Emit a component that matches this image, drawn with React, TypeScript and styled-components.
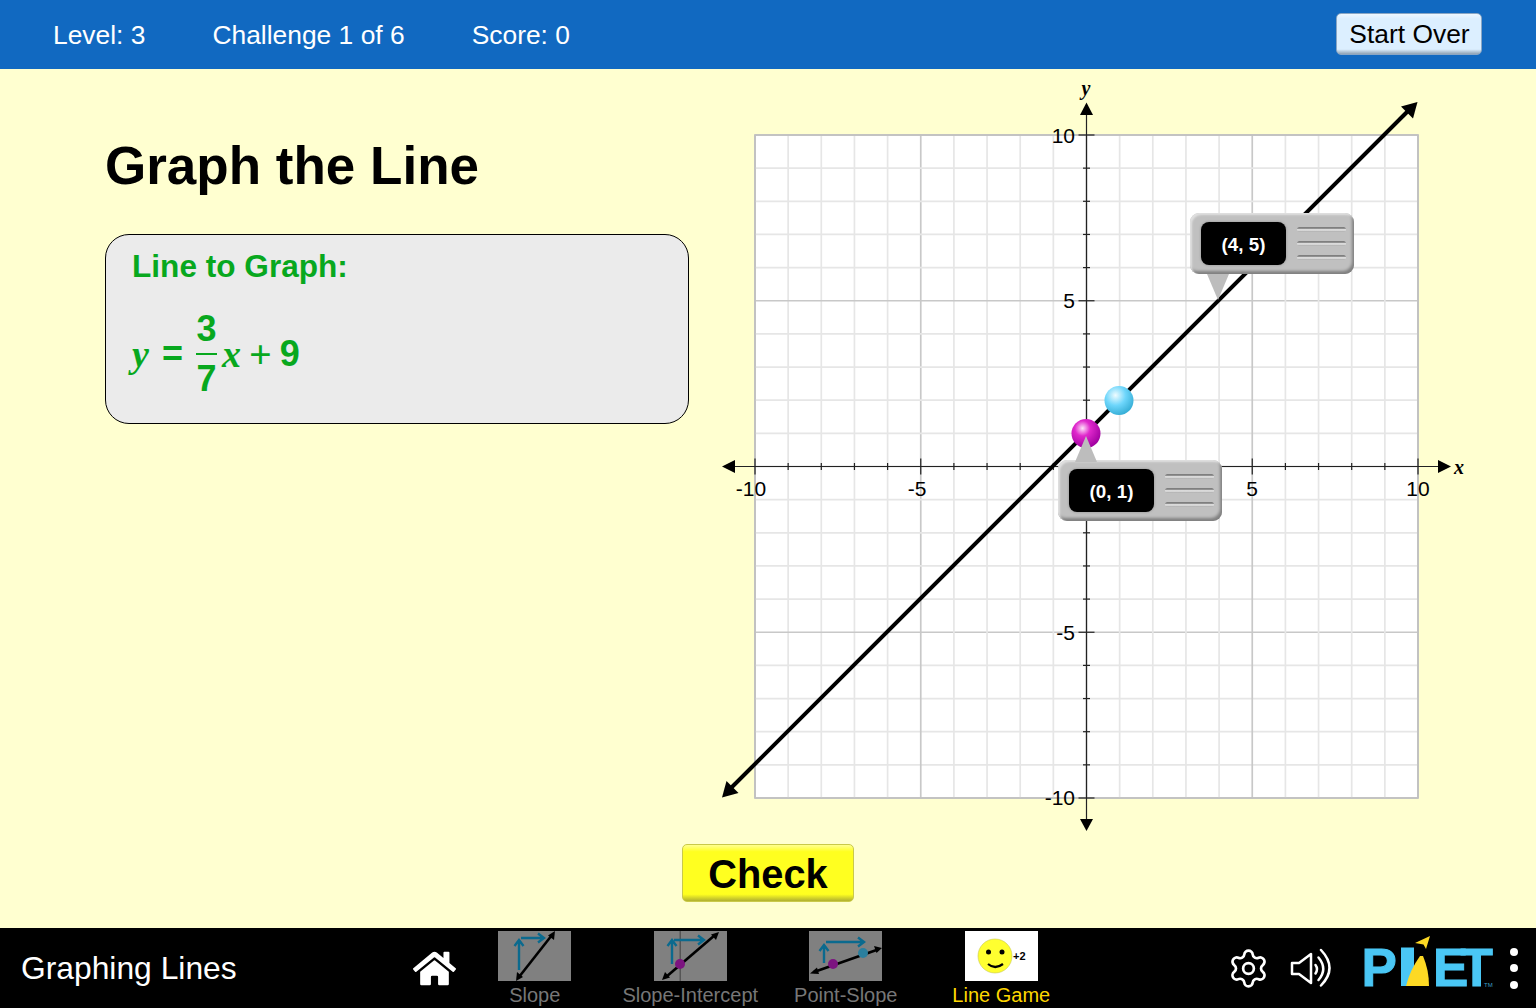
import React from "react";
import styled, { createGlobalStyle } from "styled-components";
import { FaHome } from "react-icons/fa";
import { Settings } from "lucide-react";

const GlobalStyle = createGlobalStyle`
  html, body { margin: 0; padding: 0; }
  body { font-family: "Liberation Sans", Arial, sans-serif; background: #ffffd0; overflow: hidden; }
`;

const Page = styled.div`
  width: 1536px;
  height: 1008px;
  display: flex;
  flex-direction: column;
`;

const TopBar = styled.header`
  height: 69px;
  flex: none;
  box-sizing: border-box;
  background: #1169c1;
  color: #fff;
  display: flex;
  align-items: center;
  padding: 2px 54px 0 53px;
  gap: 67px;
  font-size: 26.4px;
`;

const StartOver = styled.button`
  margin-left: auto;
  margin-top: -3px;
  width: 146px;
  height: 42px;
  padding: 0 0 0 1px;
  border: 1px solid #8aa6c4;
  border-radius: 5px;
  background: linear-gradient(#eef7ff 0%, #dcefff 12%, #dcefff 88%, #8fa2b4 100%);
  color: #000;
  font: 26.4px "Liberation Sans", Arial, sans-serif;
`;

const Main = styled.main`
  flex: 1;
  display: flex;
  flex-direction: column;
  background: #ffffd0;
`;

const Row = styled.div`
  display: flex;
  height: 770px;
`;

const LeftColumn = styled.section`
  width: 700px;
  box-sizing: border-box;
  padding: 69px 0 0 105px;
`;

const Title = styled.h1`
  margin: 0 0 41px;
  font-size: 53px;
  line-height: 56px;
  font-weight: bold;
  color: #000;
`;

const EquationPanel = styled.div`
  width: 584px;
  height: 190px;
  margin-top: -1px;
  box-sizing: border-box;
  padding: 13px 0 0 26px;
  border: 1px solid #000;
  border-radius: 24px;
  background: #ebebeb;
  color: #08a81e;
`;

const PanelHeading = styled.div`
  font-size: 31.6px;
  line-height: 36px;
  font-weight: bold;
`;

const Equation = styled.div`
  display: flex;
  align-items: center;
  margin-top: 28px;
  height: 84px;
`;

const MathVar = styled.span<{ $gap?: number }>`
  font: italic bold 38px "Liberation Serif", serif;
  margin-left: ${(p) => p.$gap ?? 0}px;
`;

const MathNum = styled.span<{ $gap?: number }>`
  font-size: 36px;
  font-weight: bold;
  margin-left: ${(p) => p.$gap ?? 0}px;
`;

const MathPlus = styled.span`
  font: bold 40px "Liberation Serif", serif;
  margin-left: 8px;
`;

const Fraction = styled.div`
  display: flex;
  flex-direction: column;
  align-items: center;
  margin-left: 13px;
  font-size: 36px;
  font-weight: bold;
  line-height: 40px;
`;

const FractionBar = styled.div`
  width: 21px;
  height: 2px;
  margin: 4px 0;
  background: currentColor;
`;

const GraphArea = styled.div`
  position: relative;
  width: 780px;
  height: 770px;
`;

const GraphSvg = styled.svg`
  display: block;
`;

const Callout = styled.div<{ $left: number; $top: number }>`
  position: absolute;
  left: ${(p) => p.$left}px;
  top: ${(p) => p.$top}px;
  width: 164px;
  height: 61px;
  box-sizing: border-box;
  padding: 9px 8px 9px 11px;
  display: flex;
  align-items: stretch;
  border-radius: 9px;
  background: #c0c0c0;
  box-shadow: inset 2px 2px 2px #e0e0e0, inset -2px -3px 3px #808080;
`;

const CalloutPointer = styled.div<{ $up?: boolean; $left: number }>`
  position: absolute;
  left: ${(p) => p.$left}px;
  width: 22px;
  height: 26px;
  background: #bdbdbd;
  ${(p) =>
    p.$up
      ? "top: -24px; clip-path: polygon(50% 0, 100% 100%, 0 100%);"
      : "bottom: -26px; clip-path: polygon(0 0, 100% 0, 50% 100%);"}
`;

const CalloutValue = styled.div`
  width: 85px;
  box-sizing: border-box;
  padding-top: 3px;
  border-radius: 8px;
  background: #000;
  box-shadow: 0 0 2px 1px #a8a8a8;
  color: #fff;
  font-size: 18.8px;
  font-weight: bold;
  display: flex;
  align-items: center;
  justify-content: center;
`;

const Grip = styled.div`
  flex: 1;
  margin-left: 11px;
  display: flex;
  flex-direction: column;
  justify-content: space-around;
`;

const GripLine = styled.div`
  height: 5px;
  border-radius: 3px;
  background: linear-gradient(#7f7f7f 0%, #7f7f7f 25%, #ececec 55%, #a8a8a8 100%);
`;

const CheckButton = styled.button`
  align-self: center;
  margin-top: 5px;
  width: 172px;
  height: 58px;
  padding: 2px 0 0;
  border: 1px solid #c9c94a;
  border-radius: 5px;
  background: linear-gradient(#ffff90 0%, #ffff20 12%, #ffff20 88%, #b0b030 100%);
  color: #000;
  font: bold 39.8px "Liberation Sans", Arial, sans-serif;
`;

const BottomBar = styled.footer`
  height: 80px;
  flex: none;
  background: #000;
  color: #fff;
  display: flex;
  align-items: center;
`;

const SimTitle = styled.div`
  width: 413px;
  box-sizing: border-box;
  padding-left: 21px;
  font-size: 31.8px;
`;

const HomeButton = styled.div`
  width: 44px;
  display: flex;
  color: #fff;
  font-size: 43px;
`;

const ScreenTab = styled.div<{ $active?: boolean }>`
  width: 155.5px;
  height: 80px;
  display: flex;
  flex-direction: column;
  align-items: center;
  padding-top: 3px;
  box-sizing: border-box;
  font-size: 20px;
  color: ${(p) => (p.$active ? "#ffd700" : "#777")};
`;

const TabThumb = styled.svg`
  display: block;
  width: 73px;
  height: 50px;
  margin-bottom: 2px;
`;

const TabLabel = styled.div`
  line-height: 24px;
  white-space: nowrap;
`;

const ToolGroup = styled.div`
  display: flex;
  align-items: center;
  margin-left: 147.5px;
`;

const SoundIcon = styled.svg`
  margin-left: 20px;
  display: block;
`;

const LogoSvg = styled.svg`
  margin: 0 0 4px 27px;
  display: block;
`;

const MoreDots = styled.div`
  margin-left: 13px;
  display: flex;
  flex-direction: column;
  gap: 8.5px;
`;

const Dot = styled.div`
  width: 8px;
  height: 8px;
  border-radius: 50%;
  background: #fff;
`;

const UNIT = 33.15;
const X0 = 1086.5;
const Y0 = 466.5;
const steps = Array.from({ length: 21 }, (_, i) => i - 10);
const px = (v: number) => X0 + v * UNIT;
const py = (v: number) => Y0 - v * UNIT;

const AXIS = "#222";
const LABEL_FONT = '"Liberation Sans", Arial, sans-serif';

const Graph: React.FC = () => (
  <GraphSvg width={780} height={770} viewBox="700 69 780 770">
    <defs>
      <radialGradient id="magentaBall" cx="38%" cy="32%" r="70%">
        <stop offset="0%" stopColor="#ffe4fa" />
        <stop offset="38%" stopColor="#e028cc" />
        <stop offset="100%" stopColor="#a000a0" />
      </radialGradient>
      <radialGradient id="cyanBall" cx="38%" cy="32%" r="70%">
        <stop offset="0%" stopColor="#f0fcff" />
        <stop offset="50%" stopColor="#6ed6fb" />
        <stop offset="100%" stopColor="#36aed6" />
      </radialGradient>
    </defs>
    <rect x={755} y={135} width={663} height={663} fill="#fff" />
    {steps.map((v) => {
      const major = v % 5 === 0;
      return (
        <g key={v} stroke={major ? "#c8c8c8" : "#e6e6e6"} strokeWidth={1.7}>
          <line x1={px(v)} y1={135} x2={px(v)} y2={798} />
          <line x1={755} y1={py(v)} x2={1418} y2={py(v)} />
        </g>
      );
    })}
    <rect x={755} y={135} width={663} height={663} fill="none" stroke="#c0c0c0" strokeWidth={1.7} />

    <g stroke={AXIS} strokeWidth={1.2}>
      <line x1={730} y1={Y0} x2={1442} y2={Y0} />
      <line x1={X0} y1={110} x2={X0} y2={824} />
      {steps
        .filter((v) => v !== 0)
        .map((v) => {
          const t = v % 5 === 0 ? 8 : 3.5;
          return (
            <g key={v}>
              <line x1={px(v)} y1={Y0 - t} x2={px(v)} y2={Y0 + t} />
              <line x1={X0 - t} y1={py(v)} x2={X0 + t} y2={py(v)} />
            </g>
          );
        })}
    </g>
    <polygon points="722,466.5 735,460 735,473" fill="#000" />
    <polygon points="1451,466.5 1438,460 1438,473" fill="#000" />
    <polygon points="1086.5,102.5 1080,115 1093,115" fill="#000" />
    <polygon points="1086.5,831 1080,819 1093,819" fill="#000" />

    <g fontFamily={LABEL_FONT} fontSize={21} fill="#000">
      <text x={751} y={496} textAnchor="middle">-10</text>
      <text x={917} y={496} textAnchor="middle">-5</text>
      <text x={1252} y={496} textAnchor="middle">5</text>
      <text x={1418} y={496} textAnchor="middle">10</text>
      <text x={1075} y={143} textAnchor="end">10</text>
      <text x={1075} y={308} textAnchor="end">5</text>
      <text x={1075} y={640} textAnchor="end">-5</text>
      <text x={1075} y={805} textAnchor="end">-10</text>
    </g>
    <g fontFamily='"Liberation Serif", serif' fontSize={20} fontStyle="italic" fontWeight="bold" fill="#000">
      <text x={1086} y={95} textAnchor="middle">y</text>
      <text x={1459} y={474} textAnchor="middle">x</text>
    </g>

    <line x1={730} y1={789} x2={1409} y2={110} stroke="#000" strokeWidth={4} />
    <polygon points="722,797.5 726.5,781 738.5,793" fill="#000" />
    <polygon points="1417.5,102 1413,118.5 1401,106.5" fill="#000" />

    <circle cx={1119} cy={400.5} r={14.5} fill="url(#cyanBall)" />
    <circle cx={1086} cy={433.5} r={14.5} fill="url(#magentaBall)" />
  </GraphSvg>
);

const PointCallout: React.FC<{ label: string; left: number; top: number; up?: boolean; pointerLeft: number }> = ({
  label,
  left,
  top,
  up,
  pointerLeft,
}) => (
  <Callout $left={left} $top={top}>
    <CalloutPointer $up={up} $left={pointerLeft} />
    <CalloutValue>{label}</CalloutValue>
    <Grip>
      <GripLine />
      <GripLine />
      <GripLine />
    </Grip>
  </Callout>
);

const SlopeThumb = () => (
  <TabThumb viewBox="0 0 73 50">
    <rect width={73} height={50} fill="#808080" />
    <g stroke="#0b6a8e" strokeWidth={2.4} fill="none">
      <path d="M21 39V10M16.5 15l4.5-6 4.5 6" />
      <path d="M23 7H46M40 2.5l6 4.5-6 4.5" />
    </g>
    <path d="M21 46L54 4" stroke="#000" strokeWidth={2.6} />
    <polygon points="18,50 19,41 25,46" fill="#000" />
    <polygon points="57,0 56,9 50,4.5" fill="#000" />
  </TabThumb>
);

const InterceptThumb = () => (
  <TabThumb viewBox="0 0 73 50">
    <rect width={73} height={50} fill="#808080" />
    <rect x={25.5} width={1.5} height={50} fill="#555" />
    <g stroke="#0b6a8e" strokeWidth={2.4} fill="none">
      <path d="M18 33V10M13.5 15l4.5-6 4.5 6" />
      <path d="M20 9H50M44 4.5l6 4.5-6 4.5" />
    </g>
    <path d="M12 46L61 4" stroke="#000" strokeWidth={2.6} />
    <polygon points="8,49 11,41 16,46.5" fill="#000" />
    <polygon points="65,1 62,9 57,3.5" fill="#000" />
    <circle cx={26} cy={33} r={5} fill="#7c1480" />
  </TabThumb>
);

const PointSlopeThumb = () => (
  <TabThumb viewBox="0 0 73 50">
    <rect width={73} height={50} fill="#808080" />
    <g stroke="#0b6a8e" strokeWidth={2.4} fill="none">
      <path d="M15 32V15M10.5 20l4.5-6 4.5 6" />
      <path d="M17 11H55M49 6.5l6 4.5-6 4.5" />
    </g>
    <path d="M5 41L69 18.5" stroke="#000" strokeWidth={2.6} />
    <polygon points="1,42.5 8,36.5 10,43" fill="#000" />
    <polygon points="73,17 65,15 67.5,22" fill="#000" />
    <circle cx={24} cy={33} r={5} fill="#7c1480" />
    <circle cx={54} cy={22} r={5} fill="#2b7f9e" />
  </TabThumb>
);

const GameThumb = () => (
  <TabThumb viewBox="0 0 73 50">
    <rect width={73} height={50} fill="#fff" />
    <circle cx={30} cy={25} r={17} fill="#ffff30" stroke="#c8c850" strokeWidth={0.6} />
    <circle cx={23.5} cy={21} r={2.5} fill="#000" />
    <circle cx={37} cy={21} r={2.5} fill="#000" />
    <path d="M23 33 Q30 39 38 33" stroke="#000" strokeWidth={2.2} fill="none" />
    <text x={48} y={29} fontFamily={LABEL_FONT} fontSize={11} fontWeight="bold" fill="#000">+2</text>
  </TabThumb>
);

const Sound = () => (
  <SoundIcon width={44} height={40} viewBox="0 0 44 40" fill="none" stroke="#fff" strokeWidth={2.5} strokeLinecap="round" strokeLinejoin="round">
    <path d="M2 15H9L21 6V35L9 26H2Z" />
    <path d="M25.5 17Q28.5 21 25.5 25.5" />
    <path d="M28.5 9.5Q38 21 28.5 32" />
    <path d="M31 2Q48 20 31 37.5" />
  </SoundIcon>
);

const Logo = () => (
  <LogoSvg width={136} height={64} viewBox="-4 0 136 64">
    <g fontFamily={LABEL_FONT} fontWeight="bold" fontSize={53} fill="#4ac7f5" stroke="#4ac7f5" strokeWidth={1}>
      <text x={-3.5} y={51.5}>P</text>
      <text x={68} y={51.5} letterSpacing={-7.8}>ET</text>
    </g>
    <rect x={36} y={13.5} width={13} height={38.5} fill="#4ac7f5" />
    <path d="M41 52Q45 36 55 22H58Q64 36 64 52Z" fill="#fdd924" />
    <polygon points="50,9 65,2 61,15 58.5,10.5" fill="#fdd924" />
    <text x={119} y={53} fontFamily={LABEL_FONT} fontSize={6} fill="#3a9fc4">TM</text>
  </LogoSvg>
);

const App: React.FC = () => (
  <Page>
    <GlobalStyle />
    <TopBar>
      <span>Level: 3</span>
      <span>Challenge 1 of 6</span>
      <span>Score: 0</span>
      <StartOver>Start Over</StartOver>
    </TopBar>
    <Main>
      <Row>
        <LeftColumn>
          <Title>Graph the Line</Title>
          <EquationPanel>
            <PanelHeading>Line to Graph:</PanelHeading>
            <Equation>
              <MathVar>y</MathVar>
              <MathNum $gap={13}>=</MathNum>
              <Fraction>
                <span>3</span>
                <FractionBar />
                <span>7</span>
              </Fraction>
              <MathVar $gap={5}>x</MathVar>
              <MathPlus>+</MathPlus>
              <MathNum $gap={8}>9</MathNum>
            </Equation>
          </EquationPanel>
        </LeftColumn>
        <GraphArea>
          <Graph />
          <PointCallout label="(4, 5)" left={490} top={144} pointerLeft={17} />
          <PointCallout label="(0, 1)" left={358} top={391} up pointerLeft={17} />
        </GraphArea>
      </Row>
      <CheckButton>Check</CheckButton>
    </Main>
    <BottomBar>
      <SimTitle>Graphing Lines</SimTitle>
      <HomeButton>
        <FaHome />
      </HomeButton>
      <ScreenTab>
        <SlopeThumb />
        <TabLabel>Slope</TabLabel>
      </ScreenTab>
      <ScreenTab>
        <InterceptThumb />
        <TabLabel>Slope-Intercept</TabLabel>
      </ScreenTab>
      <ScreenTab>
        <PointSlopeThumb />
        <TabLabel>Point-Slope</TabLabel>
      </ScreenTab>
      <ScreenTab $active>
        <GameThumb />
        <TabLabel>Line Game</TabLabel>
      </ScreenTab>
      <ToolGroup>
        <Settings size={43} strokeWidth={1.5} color="#fff" />
        <Sound />
        <Logo />
        <MoreDots>
          <Dot />
          <Dot />
          <Dot />
        </MoreDots>
      </ToolGroup>
    </BottomBar>
  </Page>
);

export default App;
